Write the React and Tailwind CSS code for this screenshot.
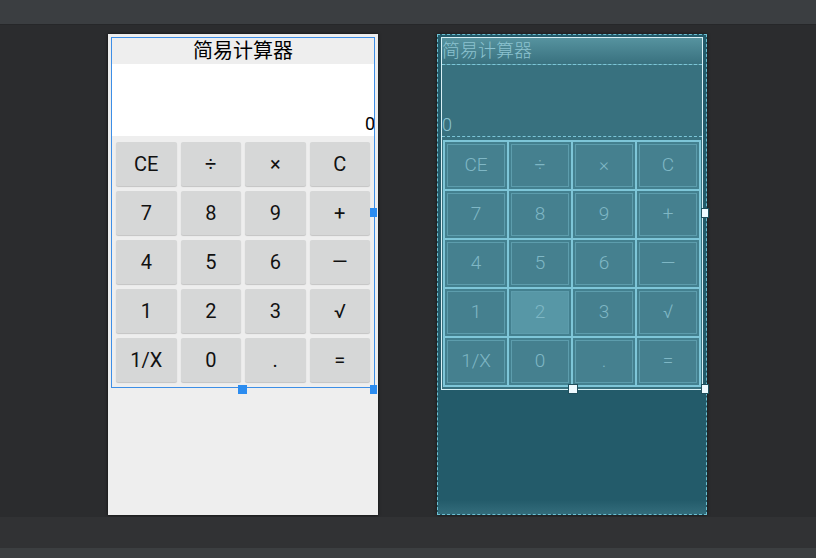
// Layout editor preview: design view on the left, blueprint view on the right.
const keys = [
  ['CE', '÷', '×', 'C'],
  ['7', '8', '9', '+'],
  ['4', '5', '6', '—'],
  ['1', '2', '3', '√'],
  ['1/X', '0', '.', '='],
];

const font = { fontFamily: 'Roboto, "Noto Sans CJK SC", sans-serif' };

function DesignView() {
  return (
    <div className="w-[270px] h-[481px] bg-[#eeeeee] shadow-[0_0_3px_rgba(0,0,0,0.7)] pt-[3px] px-[3px]">
      <div className="relative flex flex-col">
        <div className="h-[27px] flex items-center justify-center text-[20px] leading-none text-black">简易计算器</div>
        <div className="h-[72px] bg-white flex items-end justify-end pb-[3px] text-[18px] leading-none text-black">0</div>
        <div className="grid grid-cols-4 gap-x-[4px] gap-y-[5px] px-[5px] py-[6px]">
          {keys.flat().map((k, i) => (
            <div
              key={i}
              className="h-[44px] rounded-[2px] bg-[#d6d7d7] shadow-[0_1px_1px_rgba(0,0,0,0.18)] flex items-center justify-center text-[20px] text-[#111]"
            >
              {k}
            </div>
          ))}
        </div>
        <div className="absolute inset-0 border border-[#3d8ee6]" />
        <div className="absolute left-[259px] top-[171px] w-[7px] h-[9px] bg-[#2b8cf0]" />
        <div className="absolute left-[127px] top-[348px] w-[9px] h-[9px] bg-[#2b8cf0]" />
        <div className="absolute left-[259px] top-[348px] w-[7px] h-[9px] bg-[#2b8cf0]" />
      </div>
    </div>
  );
}

function BlueprintView() {
  return (
    <div className="w-[270px] h-[481px] bg-[#235b6a] border border-dashed border-[#6cc0d3] flex flex-col shadow-[0_0_3px_rgba(0,0,0,0.6)]">
      <div className="relative mt-[2px] mx-[3px] flex flex-col bg-[#38717f] border border-[#d8f1f6]">
        <div className="h-[27px] flex items-center pl-[0px] text-[18px] leading-none font-light text-[#8cc3d0] bg-gradient-to-b from-[#56939f] to-[#39717f] border-b border-dashed border-[#7cc6d8]">
          简易计算器
        </div>
        <div className="h-[72px] flex items-end pb-[2px] text-[18px] leading-none font-light text-[#8cc3d0] border-b border-dashed border-[#7cc6d8]">
          0
        </div>
        <div className="px-[1px] pt-[3px] pb-[2px]">
          <div className="grid grid-cols-4 gap-[2px] p-[2px] bg-[#7ec6d8]">
            {keys.flat().map((k, i) => (
              <div
                key={i}
                className={
                  'h-[47px] flex items-center justify-center text-[19px] font-light text-[#7fb7c5] shadow-[inset_0_0_0_2px_#43808f,inset_0_0_0_3px_#5d9dad] ' +
                  (k === '2' ? 'bg-[#5797a6]' : 'bg-[#45808f]')
                }
              >
                {k}
              </div>
            ))}
          </div>
        </div>
        <div className="absolute left-[126px] top-[346px] w-[10px] h-[10px] bg-[#eefaff] border border-[#1f4f5c]" />
        <div className="absolute left-[259px] top-[346px] w-[8px] h-[10px] bg-[#eefaff] border border-[#1f4f5c]" />
        <div className="absolute left-[259px] top-[170px] w-[8px] h-[10px] bg-[#eefaff] border border-[#1f4f5c]" />
      </div>
      <div className="flex-1" />
      <div className="h-[14px] bg-gradient-to-b from-[#235b6a] to-[#336c7b]" />
    </div>
  );
}

export default function App() {
  return (
    <div className="w-[816px] h-[558px] flex flex-col bg-[#2b2c2e] overflow-hidden" style={font}>
      <div className="h-[25px] bg-[#3b3e41] border-b border-[#262729]" />
      <div className="h-[492px] flex gap-[59px] pl-[108px] pt-[9px]">
        <DesignView />
        <BlueprintView />
      </div>
      <div className="h-[31px] bg-[#313234]" />
      <div className="h-[10px] bg-[#3c3f41]" />
    </div>
  );
}
